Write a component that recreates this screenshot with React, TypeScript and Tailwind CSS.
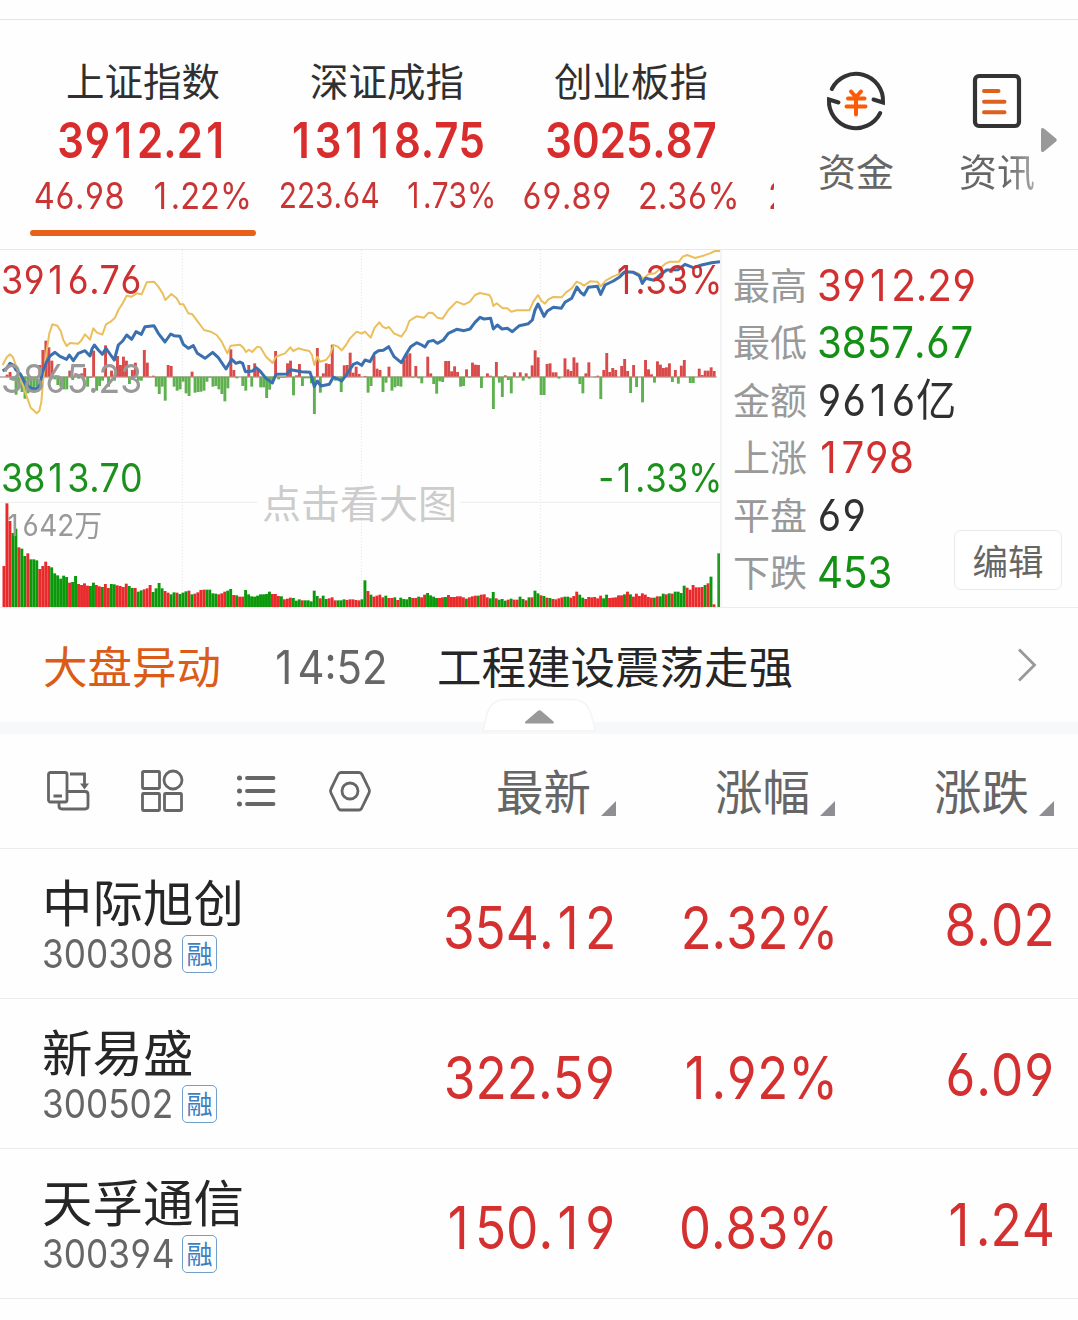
import clsx from 'clsx';

type Indice = {
  nome: string;
  valor: string;
  variacao: string;
  percentual: string;
};

type Acao = {
  nome: string;
  codigo: string;
  preco: string;
  percentual: string;
  variacao: string;
};

const INDICES: Indice[] = [
  { nome: '上证指数', valor: '3912.21', variacao: '46.98', percentual: '1.22%' },
  { nome: '深证成指', valor: '13118.75', variacao: '223.64', percentual: '1.73%' },
  { nome: '创业板指', valor: '3025.87', variacao: '69.89', percentual: '2.36%' },
];

const RESUMO = [
  { label: '最高', valor: '3912.29', cor: 'text-[#d03030]' },
  { label: '最低', valor: '3857.67', cor: 'text-[#149014]' },
  { label: '金额', valor: '9616亿', cor: 'text-[#303030]' },
  { label: '上涨', valor: '1798', cor: 'text-[#d03030]' },
  { label: '平盘', valor: '69', cor: 'text-[#303030]' },
  { label: '下跌', valor: '453', cor: 'text-[#149014]' },
];

const ACOES: Acao[] = [
  { nome: '中际旭创', codigo: '300308', preco: '354.12', percentual: '2.32%', variacao: '8.02' },
  { nome: '新易盛', codigo: '300502', preco: '322.59', percentual: '1.92%', variacao: '6.09' },
  { nome: '天孚通信', codigo: '300394', preco: '150.19', percentual: '0.83%', variacao: '1.24' },
];

const COLUNAS = ['最新', '涨幅', '涨跌'];

// The chart works in thirds of a pixel.
const PASSO = 8.95;
const BASE_FORCA = 395;
const BASE_VOLUME = 1086;

const FORCA = [
  0, 6, 14, -12, -54, -35, -46, -66, -50, -45, -38, -30, 35, 80, 108, 88, 48, -8, -25, -30,
  -38, -38, 18, -10, 10, -6, 10, 26, -30, -4, 78, -42, -28, -12, 94, -30, 18, -12, 62, 35,
  60, 48, -22, 20, 42, -12, -12, 80, 42, -2, 3, -30, -52, -30, -72, 35, 32, -30, -42, -38,
  -15, -50, -58, 15, -48, -46, -45, -42, -15, -3, -30, -28, -38, -52, -74, -35, 82, 20, -5, 0,
  -28, -42, 35, -30, 40, 20, -32, -32, -64, -39, -12, 77, -8, -3, -3, 40, 48, -56, 4, 38,
  -28, -5, -5, -20, -112, 86, -48, 10, 40, 38, 96, -12, -10, -46, 34, 35, 72, 12, 30, 8,
  0, 2, -48, -28, 62, 24, 20, -46, -18, 30, -42, -32, -28, -30, 50, 66, 70, -3, 32, -5,
  -20, 0, 60, 10, -22, -51, -14, -16, 47, 47, 16, 31, 14, -30, -28, 22, -3, 42, 36, 35,
  -34, 0, 10, 3, -97, 44, -18, -61, 4, -10, -50, 13, -2, 13, -12, 10, -6, 34, 79, 58,
  -55, -55, 38, 40, 13, 13, -6, 0, 55, 22, 17, 58, 42, -22, -50, 10, 43, 0, -2, 3,
  -67, 20, 71, 14, 26, 20, 0, 32, 53, 17, -49, 35, -31, 0, -77, 50, 22, 7, -18, 46,
  36, 26, 28, 40, -16, 20, -21, 33, 50, 0, -19, -19, 0, 24, 5, 18, 18, 28, 17,
];

const VOLUME = [
  123, 311, 258, 222, 235, 179, 175, 153, 161, 143, 143, 140, 114, 123, 136, 123, 119, 101, 95, 85,
  94, 90, 73, 75, 93, 69, 66, 71, 64, 63, 73, 66, 62, 60, 69, 57, 69, 68, 65, 63,
  60, 70, 63, 57, 57, 46, 50, 53, 56, 66, 45, 56, 72, 56, 48, 43, 38, 44, 43, 39,
  43, 47, 49, 38, 40, 44, 51, 52, 52, 52, 41, 40, 38, 41, 46, 49, 54, 36, 35, 31,
  31, 51, 38, 32, 31, 34, 38, 38, 39, 46, 39, 39, 33, 32, 23, 25, 28, 27, 19, 23,
  20, 20, 20, 17, 49, 33, 26, 34, 24, 26, 29, 20, 20, 20, 23, 21, 23, 23, 21, 20,
  23, 80, 48, 37, 31, 34, 37, 29, 34, 27, 27, 29, 21, 28, 24, 23, 30, 27, 27, 31,
  29, 37, 42, 35, 31, 27, 27, 29, 30, 36, 30, 30, 32, 32, 29, 25, 29, 32, 34, 34,
  37, 38, 29, 26, 45, 26, 22, 24, 19, 22, 25, 22, 22, 31, 24, 20, 29, 29, 49, 41,
  35, 33, 28, 27, 24, 23, 26, 29, 31, 31, 28, 33, 46, 37, 28, 24, 30, 29, 30, 26,
  34, 26, 37, 27, 28, 29, 35, 35, 38, 46, 38, 31, 40, 33, 41, 37, 30, 28, 28, 32,
  32, 40, 38, 41, 40, 46, 46, 42, 64, 58, 52, 66, 59, 59, 60, 66, 71, 91, 8,
];

// r = up minute, g = down minute
const CORES_VOLUME = [
  'rrrggrggrgggrrrrggggg',
  'grggrrrrggrrgrrggrrrrgg',
  'rggrrrggggrrggrgggrgrrr',
  'rggggrrrggrgrrgggggggggrr',
  'rgrrrgggrgggggrggrrrgggrr',
  'rrrggrgrrrrgrrgrggggrrg',
  'rrggggrrgrrrrrrgrrrgrrr',
  'ggrgggrgrrggrgrggrgrgrr',
  'rrggrrrggrrrrrrggrrrrrg',
  'rgrrrrrrrgrggrgrggggrrrrrrgrgrgggg',
  'rrrrrrr',
].join('');

const LINHA_MEDIA =
  '8,360 20,337 30,328 38,335 48,362 62,400 75,440 92,488 100,495 110,505 118,498 124,470 130,400 138,330 148,265 157,238 172,242 182,258 190,285 200,303 210,294 235,296 245,285 255,268 270,284 280,250 290,262 307,269 318,238 332,230 345,218 355,195 368,175 380,152 395,155 410,145 425,148 440,112 462,110 475,125 488,145 496,165 514,147 530,160 540,178 550,178 565,205 577,208 595,232 612,255 632,260 650,270 665,290 682,325 692,302 720,299 ' +
  '730,308 738,321 747,314 756,321 772,305 782,308 798,335 818,354 828,335 855,325 871,307 880,318 895,310 910,314 928,318 936,330 943,360 952,335 960,350 978,345 990,330 1000,300 1012,304 1025,316 1038,300 1050,280 1070,260 1085,266 1095,260 1112,278 1124,248 1138,232 1148,245 1158,250 1167,246 1182,265 1204,275 1218,255 1228,228 1240,220 1250,214 1272,218 1286,203 1298,204 1312,218 1328,221 1345,195 1370,170 1392,179 1410,170 1425,150 1440,144 ' +
  '1468,150 1474,160 1480,183 1490,175 1508,190 1522,190 1534,200 1550,196 1588,196 1600,170 1614,150 1625,168 1635,176 1645,163 1660,156 1685,157 1698,142 1715,130 1730,110 1742,115 1752,122 1770,109 1792,110 1802,124 1818,106 1840,94 1870,82 1900,80 1915,85 1930,102 1945,88 1965,85 1980,70 1998,55 2010,50 2037,50 2048,35 2062,30 2085,39 2110,32 2130,25 2145,18 2160,18';

const LINHA_INDICE =
  '8,378 20,370 30,355 40,360 48,375 62,388 75,415 90,428 105,433 118,425 128,380 140,350 150,333 165,322 180,334 200,343 208,330 220,347 235,325 255,317 270,333 276,312 283,300 295,315 307,328 318,310 332,330 343,345 355,300 368,288 380,270 395,283 408,260 424,268 435,245 462,242 475,265 495,291 512,267 522,272 540,274 550,298 565,310 580,302 592,325 615,340 638,322 655,338 678,372 695,343 708,355 720,351 ' +
  '728,355 736,380 758,378 768,368 780,378 798,400 817,414 828,388 860,387 872,374 905,380 930,382 936,400 943,425 952,408 963,423 988,418 1000,396 1025,408 1040,388 1060,358 1072,353 1085,361 1095,345 1110,350 1124,325 1135,317 1150,316 1166,305 1182,335 1204,353 1220,325 1232,305 1250,293 1265,300 1275,306 1285,290 1300,286 1312,295 1330,285 1345,265 1370,253 1392,257 1410,252 1425,232 1440,217 ' +
  '1452,222 1472,220 1480,252 1492,240 1506,252 1522,250 1537,260 1558,242 1585,236 1597,225 1605,195 1614,177 1623,195 1632,214 1642,198 1660,187 1684,190 1695,172 1715,160 1731,126 1742,142 1752,150 1765,127 1792,124 1802,148 1815,120 1840,108 1860,95 1875,80 1900,82 1918,92 1927,115 1937,100 1962,106 1980,90 2000,75 2035,74 2055,58 2080,68 2105,60 2135,53 2160,50';

function Numero({ className, children }: { className?: string; children: string }) {
  return (
    <span
      className={clsx(
        "inline-block whitespace-pre font-['Inter','Noto_Sans_CJK_SC',sans-serif] leading-none [font-feature-settings:'cv03','cv04'] [font-kerning:none]",
        className,
      )}
    >
      {children.split(/([169])/).map((parte, i) => {
        if (parte === '1') {
          return (
            <span key={i} className="mr-[.12em] ml-[.08em]">
              1
            </span>
          );
        }
        if (parte === '6' || parte === '9') {
          return (
            <span key={i} className="mx-[.018em]">
              {parte}
            </span>
          );
        }
        return parte;
      })}
    </span>
  );
}

function IndiceCard({ indice, ativo }: { indice: Indice; ativo: boolean }) {
  const longo = indice.valor.length > 7;

  return (
    <div className="flex h-full w-[226px] shrink-0 flex-col items-center">
      <p className="mt-[39px] text-[38.5px] leading-[40px] text-[#303030]">{indice.nome}</p>
      <Numero className="mt-[16px] scale-x-[.84] text-[50px] font-semibold text-[#d92c2c]">{indice.valor}</Numero>
      <div
        className={clsx(
          'mt-[12px] flex h-[37px] items-center gap-[30px] text-[#c93434]',
          longo ? 'scale-x-[.84] text-[35.5px]' : 'scale-x-[.88] text-[37px]',
        )}
      >
        <Numero>{indice.variacao}</Numero>
        <Numero>{indice.percentual}</Numero>
      </div>
      {ativo && <div className="mt-[16px] h-[6px] w-full shrink-0 rounded-full bg-[#e8611a]" />}
    </div>
  );
}

function IconeCapital() {
  return (
    <svg className="h-[64px] w-[64px]" viewBox="0 0 64 64" fill="none" strokeLinecap="round">
      <g stroke="#333" strokeWidth="4">
        <path d="M7.800 20A27 27 0 0 1 59 33.500L49.500 30.500" />
        <path d="M56.200 44A27 27 0 0 1 5 30.500L14.500 33.500" />
      </g>
      <path d="M27 22.500 32 28 37 22.500M32 28V45.500M24 29.500H40.500M22.500 37.500H41.500" stroke="#fb5a06" strokeWidth="4" />
    </svg>
  );
}

function IconeNoticias() {
  return (
    <svg className="h-[64px] w-[64px]" viewBox="0 0 64 64" fill="none" strokeLinecap="round">
      <rect x="10" y="7" width="44" height="50" rx="4" stroke="#333" strokeWidth="4.200" />
      <path d="M19 22H33.500M19 32.800H39.500M19 43.200H39.500" stroke="#dd601d" strokeWidth="4" />
    </svg>
  );
}

function Cabecalho() {
  return (
    <header className="flex h-[230px] border-b border-[#e8e8e8]">
      <div className="flex w-[774px] gap-[18px] overflow-hidden pl-[30px]">
        {INDICES.map((indice, i) => (
          <IndiceCard key={indice.nome} indice={indice} ativo={i === 0} />
        ))}
        <div className="w-[226px] shrink-0 pt-[157px] pl-[6px] text-[#c93434]">
          <Numero className="origin-left scale-x-[.9] text-[37px]">2</Numero>
        </div>
      </div>
      <div className="flex w-[304px] items-start pt-[49px] pl-[44px] text-[38px] leading-[40px] text-[#666]">
        <button type="button" className="flex w-[76px] flex-col items-center">
          <IconeCapital />
          <span className="mt-[17px]">资金</span>
        </button>
        <button type="button" className="ml-[65px] flex w-[76px] flex-col items-center">
          <IconeNoticias />
          <span className="mt-[17px] bg-gradient-to-r from-[#666] from-60% to-[#aaa] bg-clip-text text-transparent">资讯</span>
        </button>
        <svg className="mt-[58px] ml-[6px] h-[26px] w-[16px]" viewBox="0 0 16 26">
          <path d="M0 3Q0 0 3 1.500L15 11.500Q16.500 13 15 14.500L3 24.500Q0 26 0 23Z" fill="#999" />
        </svg>
      </div>
    </header>
  );
}

function Grafico() {
  return (
    <div className="relative h-[357px] w-[720px] shrink-0">
      <svg className="absolute inset-0 h-[357px] w-[720px]" viewBox="0 15 2160 1071" fill="none">
        <path d="M547 15V1086M1084 15V1086M1621 15V1086" stroke="#e3e3e3" strokeWidth="3" strokeDasharray="3 6" />
        <path d="M0 772H772M1382 772H2160" stroke="#ececec" strokeWidth="3" />
        <path d="M0 396H2150" stroke="#8a7a66" strokeWidth="3" />
        {FORCA.map((v, i) => (
          <rect
            key={i}
            x={8 + i * PASSO}
            y={v > 0 ? BASE_FORCA - v : BASE_FORCA}
            width="8.700"
            height={Math.abs(v)}
            fill={v > 0 ? '#d94a4a' : '#5fb04e'}
          />
        ))}
        <polyline points={LINHA_MEDIA} stroke="#eabf5c" strokeWidth="6" strokeLinejoin="round" />
        <polyline points={LINHA_INDICE} stroke="#3a70b0" strokeWidth="9" strokeLinejoin="round" />
        {VOLUME.map((v, i) => (
          <rect
            key={i}
            x={7.5 + i * PASSO}
            y={BASE_VOLUME - v}
            width="8.700"
            height={v}
            fill={CORES_VOLUME[i] === 'g' ? '#0b980b' : '#e92a2a'}
          />
        ))}
        <rect x="2152" y="925" width="8" height="161" fill="#249a24" />
      </svg>
      <Numero className="absolute top-[10px] left-[1px] origin-left scale-x-[.92] text-[39px] text-[#cc3030]">3916.76</Numero>
      <Numero className="absolute top-[10px] right-[-2px] origin-right scale-x-[.89] text-[39px] text-[#cc3030]">1.33%</Numero>
      <Numero className="absolute top-[109px] left-[1px] origin-left scale-x-[.91] text-[39px] text-[#999]">3865.23</Numero>
      <Numero className="absolute top-[208px] left-[1px] origin-left scale-x-[.92] text-[39px] text-[#1c901c]">3813.70</Numero>
      <Numero className="absolute top-[208px] right-[-2px] origin-right scale-x-[.89] text-[39px] text-[#1c901c]">-1.33%</Numero>
      <Numero className="absolute top-[260px] left-[5px] origin-left scale-x-[.93] text-[30px] text-[#999]">1642万</Numero>
      <span className="absolute top-[231px] left-[262px] text-[39px] leading-[40px] text-[#ccc]">点击看大图</span>
    </div>
  );
}

function PainelResumo() {
  return (
    <div className="relative flex-1 border-l-2 border-[#f3f3f3] pt-[6px] pl-[11px]">
      {RESUMO.map((item) => (
        <div key={item.label} className="flex h-[57.500px] items-center">
          <span className="-mt-[2px] w-[84px] text-[37px] leading-[40px] text-[#999]">{item.label}</span>
          <Numero className={clsx('origin-left scale-x-[.915] text-[44px]', item.cor)}>{item.valor}</Numero>
        </div>
      ))}
      <button
        type="button"
        className="absolute right-[16px] bottom-[17px] h-[60px] w-[108px] rounded-[7px] border border-[#e9e9e9] bg-white text-[35.500px] leading-[40px] text-[#666]"
      >
        编辑
      </button>
    </div>
  );
}

function Noticia() {
  return (
    <div className="relative flex h-[126px] border-b-[12px] border-[#f7f8fa]">
      <div className="flex h-[114px] flex-1 items-center pl-[43px] text-[44.500px] leading-[48px]">
        <span className="w-[229px] text-[#db5c16]">大盘异动</span>
        <span className="flex w-[165px] pt-[3px]">
          <Numero className="origin-left scale-x-[.91] text-[46px] text-[#666]">14:52</Numero>
        </span>
        <span className="text-[#262626]">工程建设震荡走强</span>
        <svg className="mr-[41px] ml-auto h-[36px] w-[20px]" viewBox="0 0 20 36" fill="none">
          <path d="M2 2.500 17.500 18 2 33.500" stroke="#999" strokeWidth="2.800" />
        </svg>
      </div>
      <svg className="absolute -bottom-[11px] left-[481px] h-[36px] w-[116px]" viewBox="0 0 116 36">
        <path d="M2 34 6 17Q10 2.500 25 2.500H91Q106 2.500 110 17L114.500 34Z" fill="#fff" stroke="#f3f4f5" strokeWidth="1.500" />
        <path d="M57 13.800Q58.500 12.500 60 13.800L72.500 24.500Q73.500 26.500 71.500 26.500H45.500Q43 26.500 44.500 24.500Z" fill="#999" />
      </svg>
    </div>
  );
}

function BarraFerramentas() {
  return (
    <div className="flex h-[115px] items-center border-b border-[#ececec] text-[#666]">
      <svg className="ml-[46px] h-[44px] w-[330px] shrink-0" viewBox="0 0 330 44" fill="none" stroke="#666" strokeWidth="2.800">
        <rect x="2.500" y="3.500" width="18.500" height="29.500" rx="2" />
        <path d="M7.500 27H16M24 5H38.500V16" />
        <path d="M34 14.500H43L38.500 20.500Z" fill="#666" stroke="none" />
        <path d="M21 22.500H39Q42 22.500 42 25.500V37Q42 40 39 40H16Q13 40 13 37V33.500" />
        <rect x="96.500" y="2.500" width="17" height="17" rx="1" />
        <circle cx="127" cy="11" r="9" />
        <rect x="96.500" y="24.500" width="17" height="17" rx="1" />
        <rect x="118.500" y="24.500" width="17" height="17" rx="1" />
        <path d="M201 9H227.500M201 22H227.500M201 35H227.500" strokeWidth="3.800" strokeLinecap="round" />
        <path d="M193.500 9V9.010M193.500 22V22.010M193.500 35V35.010" strokeWidth="5" strokeLinecap="round" />
        <path d="M295 3.500H313Q315 3.500 316 5.500L323 20Q324 22 323 24L316 38.500Q315 41 313 41H295Q293 41 292 38.500L285 24Q284 22 285 20L292 5.500Q293 3.500 295 3.500Z" />
        <circle cx="304" cy="22" r="8" />
      </svg>
      <div className="flex w-[702px] gap-[72px] pl-[120px] text-[47.500px] leading-[48px]">
        {COLUNAS.map((coluna) => (
          <button key={coluna} type="button" className="flex w-[147px] shrink-0 items-end">
            <span className="-mb-[2px] w-[105px] pt-[2px] pb-[6px] text-left">{coluna}</span>
            <svg className="mb-[2px] h-[15px] w-[15px]" viewBox="0 0 15 15">
              <path d="M15 0V15H0Z" fill="#8e8e93" />
            </svg>
          </button>
        ))}
      </div>
    </div>
  );
}

function LinhaAcao({ acao }: { acao: Acao }) {
  return (
    <li className="flex h-[150px] border-b border-[#ececec] text-[#d43030]">
      <div className="w-[300px] pt-[23px] pl-[42px]">
        <p className="text-[50.500px] leading-[56px] text-[#262626]">{acao.nome}</p>
        <div className="mt-[7px] flex h-[38px] items-center">
          <span className="flex w-[140px]">
            <Numero className="origin-left scale-x-[.88] text-[40px] text-[#666]">{acao.codigo}</Numero>
          </span>
          <span className="flex h-[38px] w-[35px] shrink-0 items-center justify-center rounded-[5px] border border-[#6f9fca] pb-[3px] text-[26px] leading-none text-[#3d7fbe]">
            融
          </span>
        </div>
      </div>
      <div className="flex w-[316px] items-center justify-end pt-[7px]">
        <Numero className="origin-right scale-x-[.87] text-[59px]">{acao.preco}</Numero>
      </div>
      <div className="flex w-[222px] items-center justify-end pt-[7px]">
        <Numero className="origin-right scale-x-[.86] text-[59px]">{acao.percentual}</Numero>
      </div>
      <div className="flex w-[217px] items-center justify-end pt-[1px]">
        <Numero className="origin-right scale-x-[.87] text-[59px]">{acao.variacao}</Numero>
      </div>
    </li>
  );
}

export default function App() {
  return (
    <div className="h-[1320px] w-[1078px] overflow-hidden bg-[#fefefe] font-['Noto_Sans_CJK_SC',sans-serif]">
      <div className="h-[20px] border-b border-[#e4e4e4]" />
      <Cabecalho />
      <section className="flex h-[358px] border-b border-[#ececec]">
        <Grafico />
        <PainelResumo />
      </section>
      <Noticia />
      <BarraFerramentas />
      <ul>
        {ACOES.map((acao) => (
          <LinhaAcao key={acao.codigo} acao={acao} />
        ))}
      </ul>
    </div>
  );
}
